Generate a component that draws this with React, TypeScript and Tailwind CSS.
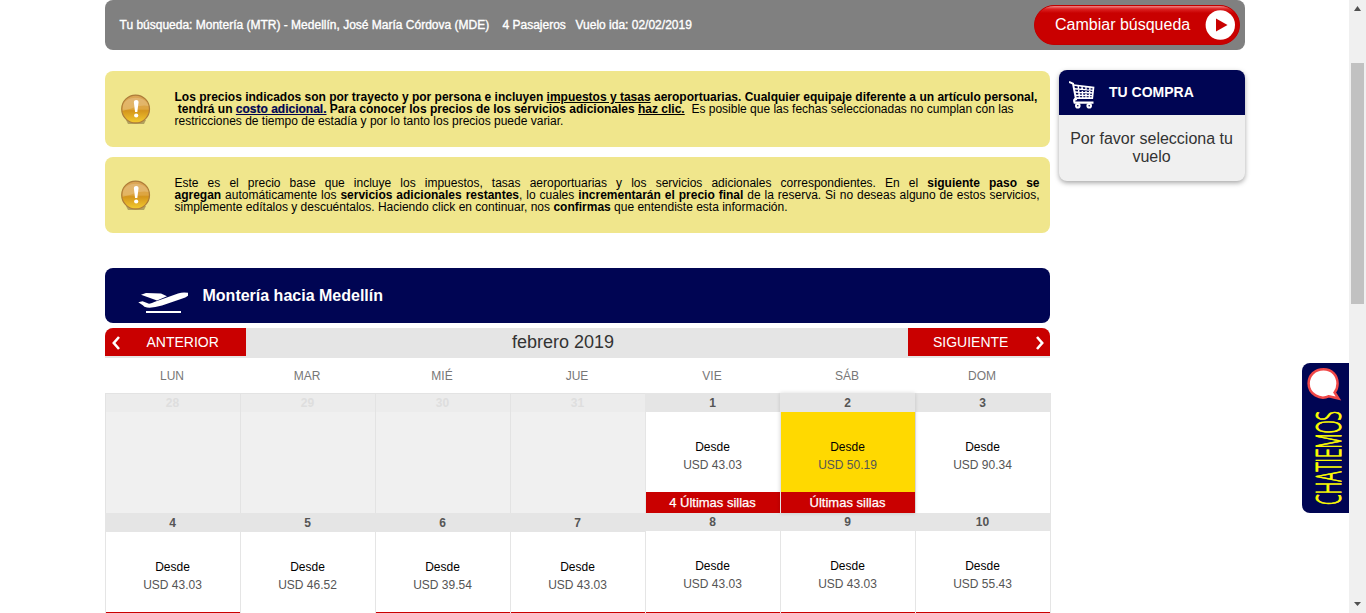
import React from "react";

type Day = {
  day: number;
  price?: string;
  tag?: string;
  selected?: boolean;
  short?: boolean;
};

const weekdays = ["LUN", "MAR", "MIÉ", "JUE", "VIE", "SÁB", "DOM"];

const weeks: Day[][] = [
  [
    { day: 28 },
    { day: 29 },
    { day: 30 },
    { day: 31 },
    { day: 1, price: "43.03", tag: "4 Últimas sillas" },
    { day: 2, price: "50.19", tag: "Últimas sillas", selected: true },
    { day: 3, price: "90.34" },
  ],
  [
    { day: 4, price: "43.03", tag: " " },
    { day: 5, price: "46.52" },
    { day: 6, price: "39.54", tag: " " },
    { day: 7, price: "43.03", tag: " " },
    { day: 8, price: "43.03", tag: " ", short: true },
    { day: 9, price: "43.03", tag: " ", short: true },
    { day: 10, price: "55.43", tag: " ", short: true },
  ],
];

function DayCell({ item }: { item: Day }) {
  if (!item.price) {
    return (
      <div className="flex h-[120px] w-[135px] flex-col border-l border-t border-[#e3e3e3] bg-[#f0f0f0] text-center">
        <div className="h-[18px] bg-[#ececec] pr-px text-xs leading-[18px] font-bold text-[#dedede]">{item.day}</div>
      </div>
    );
  }
  return (
    <div
      className={
        "flex h-[120px] w-[135px] flex-col border-l border-[#e5e5e5] text-center " +
        (item.selected ? "z-10 bg-[#ffd900] shadow-[0_0_4px_rgba(0,0,0,0.15)]" : "bg-white")
      }
    >
      <div
        className={
          "shrink-0 bg-[#e5e5e5] pr-px text-xs font-bold text-[#555] " +
          (item.short ? "h-[18px] leading-[18px]" : "h-[19px] leading-[20px]")
        }
      >
        {item.day}
      </div>
      <div className="h-[80px] shrink-0 pt-[26px] pr-px text-xs leading-[18px]">
        <div className="text-black">Desde</div>
        <div className="text-[#555]">USD {item.price}</div>
      </div>
      {item.tag && (
        <div
          className={
            "h-[21px] shrink-0 bg-[#c90000] pr-px text-[13px] leading-[21px] text-white [-webkit-text-stroke:0.25px_#fff] " +
            (item.short ? "mt-px" : "")
          }
        >
          {item.tag}
        </div>
      )}
    </div>
  );
}

function WarningIcon() {
  return (
    <svg className="ml-4 h-[30px] w-[30px] shrink-0" viewBox="0 0 30 30">
      <defs>
        <linearGradient id="amber" x1="0" y1="0" x2="0" y2="1">
          <stop offset="0" stopColor="#dba557" />
          <stop offset="0.5" stopColor="#dda540" />
          <stop offset="0.56" stopColor="#d4951c" />
          <stop offset="1" stopColor="#f2cb30" />
        </linearGradient>
      </defs>
      <path d="M5 26h20l-2 4H7z" fill="#9c8a4f" opacity="0.75" />
      <circle cx="14.6" cy="15" r="13.9" fill="url(#amber)" stroke="#ad7c3a" strokeWidth="1.2" />
      <path d="M2 12C4 1 25 1 27.500 12C20 10 13 14 1.500 17z" fill="#fff" opacity="0.18" />
      <path d="M15.2 6c1.800 0 2.500 1.100 2.300 2.800l-1.200 9.200h-2.200l-1.200-9.200c-.2-1.700.5-2.800 2.300-2.800z" fill="#fff" />
      <circle cx="15.2" cy="21.500" r="2.100" fill="#fff" />
    </svg>
  );
}

function Notice({ children }: { children: React.ReactNode }) {
  return (
    <div className="flex h-[76px] items-center rounded-lg bg-[#f0e68c]">
      <WarningIcon />
      <div className="ml-[23.5px] w-[865px] text-xs leading-3 whitespace-nowrap text-black">{children}</div>
    </div>
  );
}

function CartIcon() {
  return (
    <svg className="mt-[11px] ml-[10px] h-[28px] w-[26px] shrink-0" viewBox="0 0 26 28" fill="none" stroke="#fff">
      <path d="M0 .9L4 2.600L7.200 19.200" strokeWidth="2" />
      <path d="M4.400 4L24.500 6.600L23.300 17.200L7.200 17.200" strokeWidth="1.700" />
      <path d="M5.300 7.800L24.500 9.400M5.800 11L24 12M6.400 14.200L23.500 14.600M9.200 4.500L10.500 17.200M13 5L13.800 17.200M17 5.400L17 17.200M21 5.800L20.300 17.200" strokeWidth="1.400" />
      <path d="M7.200 17.400Q4.200 18.500 5.600 21.600L24.500 21.600" strokeWidth="2.200" />
      <circle cx="8.800" cy="24.800" r="1.800" strokeWidth="2" />
      <circle cx="20.200" cy="24.800" r="1.800" strokeWidth="2" />
    </svg>
  );
}

function SearchBar() {
  return (
    <div className="flex h-[50px] items-center justify-between rounded-lg bg-[#808080] pr-[5px] pl-[14.5px]">
      <div className="flex text-xs whitespace-pre text-white [-webkit-text-stroke:0.35px_#fff]">
        <span className="w-[383px]">Tu búsqueda: Montería (MTR) - Medellín, José María Córdova (MDE)</span>
        <span className="w-[73px]">4 Pasajeros</span>
        <span>Vuelo ida: 02/02/2019</span>
      </div>
      <button className="flex h-10 w-[206px] items-center rounded-full border border-[#c00000] bg-[#c90000] bg-[linear-gradient(to_bottom,#e88_0px,#d22_3px,#c90000_7px)] pr-[4px] pl-5 text-white">
        <span className="text-base whitespace-nowrap">Cambiar búsqueda</span>
        <svg className="ml-auto h-[30px] w-[30px]" viewBox="0 0 30 30">
          <circle cx="15.3" cy="15" r="14.7" fill="#fff" />
          <path d="M11 8.5L22.5 15L11 21.5z" fill="#c90000" />
        </svg>
      </button>
    </div>
  );
}

function Calendar() {
  return (
    <div className="mt-[5px] w-[946px]">
      <div className="flex h-[30px] w-[945px] items-start overflow-hidden rounded-t-lg bg-[#e5e5e5]">
        <div className="flex h-7 w-[141px] items-center bg-[#c90000] text-sm text-white">
          <svg className="mt-[2px] ml-[7px] h-[14px] w-[8px]" viewBox="0 0 8 14" fill="none" stroke="#fff" strokeWidth="2.6">
            <path d="M7 1L1.8 7L7 13" />
          </svg>
          <span className="ml-[26.5px]">ANTERIOR</span>
        </div>
        <div className="flex-1 pr-7 text-center text-lg leading-7 text-[#333]">febrero 2019</div>
        <div className="flex h-7 w-[142px] items-center bg-[#c90000] text-sm text-white">
          <span className="ml-[25px]">SIGUIENTE</span>
          <svg className="mt-[2px] mr-[6px] ml-auto h-[14px] w-[8px]" viewBox="0 0 8 14" fill="none" stroke="#fff" strokeWidth="2.6">
            <path d="M1 1L6.2 7L1 13" />
          </svg>
        </div>
      </div>
      <div className="flex h-[35px] text-center text-xs leading-[36px] text-[#777]">
        {weekdays.map((name) => (
          <div key={name} className="w-[135px] shrink-0 pr-px">{name}</div>
        ))}
      </div>
      {weeks.map((week, i) => (
        <div key={i} className="flex h-[120px] border-r border-[#e5e5e5]">
          {week.map((item) => (
            <DayCell key={item.day} item={item} />
          ))}
        </div>
      ))}
    </div>
  );
}

function Purchase() {
  return (
    <aside className="mt-5 ml-[9px] h-[111px] w-[186px] overflow-hidden rounded-lg bg-[#f0f0f0] shadow-[0_2px_5px_rgba(0,0,0,0.35)]">
      <div className="flex h-[45px] bg-[#000553]">
        <CartIcon />
        <span className="ml-[14px] text-sm leading-[44px] font-bold text-white">TU COMPRA</span>
      </div>
      <p className="pt-[15px] pr-px text-center text-base leading-[18px] text-[#333]">
        Por favor selecciona tu
        <br />
        vuelo
      </p>
    </aside>
  );
}

function ChatTab() {
  return (
    <div className="absolute top-[363px] left-[1302px] h-[150px] w-[47px] rounded-l-lg bg-[#000553]">
      <svg className="h-[150px] w-[47px] overflow-visible" viewBox="0 0 47 150">
        <path d="M21.500 6.200C30 6.200 35.600 12.300 35.600 20.500C35.600 24 34.600 27 32.600 29.500L36.500 35.500L27 33.200C18 37.500 6.600 31 6.600 20.500C6.600 12.300 13 6.200 21.500 6.200z" fill="#fff" stroke="#f04848" strokeWidth="2.500" />
        <text transform="translate(39 142) rotate(-90)" fontSize="34" textLength="94" lengthAdjust="spacingAndGlyphs" fill="#ffff00" stroke="#ffff00" strokeWidth="1" fontFamily="Open Sans, sans-serif" fontWeight="300">
          CHATIEMOS
        </text>
      </svg>
    </div>
  );
}

export default function App() {
  return (
    <div className="relative flex h-[613px] w-[1366px] overflow-hidden bg-white font-['Liberation_Sans',Arial,sans-serif]">
      <main className="ml-[105px] w-[1140px]">
        <SearchBar />
        <div className="flex items-start">
          <section className="mt-[21px] w-[945px] shrink-0">
            <Notice>
              <div className="w-[862px] font-bold">
                Los precios indicados son por trayecto y por persona e incluyen <span className="underline">impuestos y tasas</span> aeroportuarias. Cualquier equipaje diferente a un artículo personal,
              </div>
              <div className="whitespace-pre">
                <b> tendrá un </b><span className="text-[#000553] underline [-webkit-text-stroke:0.2px_#000553]"><b className="font-bold">costo adicional.</b></span><b> Para conocer los precios de los servicios adicionales <span className="underline">haz clic.</span></b>{"  "}Es posible que las fechas seleccionadas no cumplan con las
              </div>
              <div>restricciones de tiempo de estadía y por lo tanto los precios puede variar.</div>
            </Notice>
            <div className="h-[10px]" />
            <Notice>
              <div className="[text-align-last:justify] whitespace-normal">
                Este es el precio base que incluye los impuestos, tasas aeroportuarias y los servicios adicionales correspondientes. En el <b>siguiente paso se</b>
              </div>
              <div className="[text-align-last:justify] whitespace-normal">
                <b>agregan</b> automáticamente los <b>servicios adicionales restantes</b>, lo cuales <b>incrementarán el precio final</b> de la reserva. Si no deseas alguno de estos servicios,
              </div>
              <div>
                simplemente edítalos y descuéntalos. Haciendo click en continuar, nos <b>confirmas</b> que entendiste esta información.
              </div>
            </Notice>
            <div className="mt-[35px] flex h-[55px] rounded-lg bg-[#000553]">
              <svg className="mt-6 ml-[33px] h-[22px] w-[51px]" viewBox="0 0 51 22" fill="#fff">
                <path d="M3 2.800L8 1L23 1.400L29 4.200L19 8.400Z" />
                <path d="M0.300 10.300L4.500 9.200L11 11.800Q13 11.400 19 9L40 1.400Q45 -.2 50 .8L50 3.800Q48 5.500 43 7L24 13.600Q15 16.300 9 15.600Q6 15 4.800 13.200Z" />
                <path d="M8 19h35v2H8z" />
              </svg>
              <h2 className="ml-[13.5px] text-base leading-[55px] font-bold text-white">Montería hacia Medellín</h2>
            </div>
            <Calendar />
          </section>
          <Purchase />
        </div>
      </main>
      <div className="ml-auto flex w-[17px] flex-col items-center bg-[#f0f0f0]">
        <svg className="mt-[6px] h-[5px] w-[7px]" viewBox="0 0 7 5"><path d="M0 5L3.500 0L7 5z" fill="#505050" /></svg>
        <div className="mt-[52px] h-[241px] w-[13px] bg-[#c1c1c1]" />
        <svg className="mt-auto mb-[7px] h-[4px] w-[7px]" viewBox="0 0 7 4"><path d="M0 0L3.500 4L7 0z" fill="#505050" /></svg>
      </div>
      <ChatTab />
    </div>
  );
}
